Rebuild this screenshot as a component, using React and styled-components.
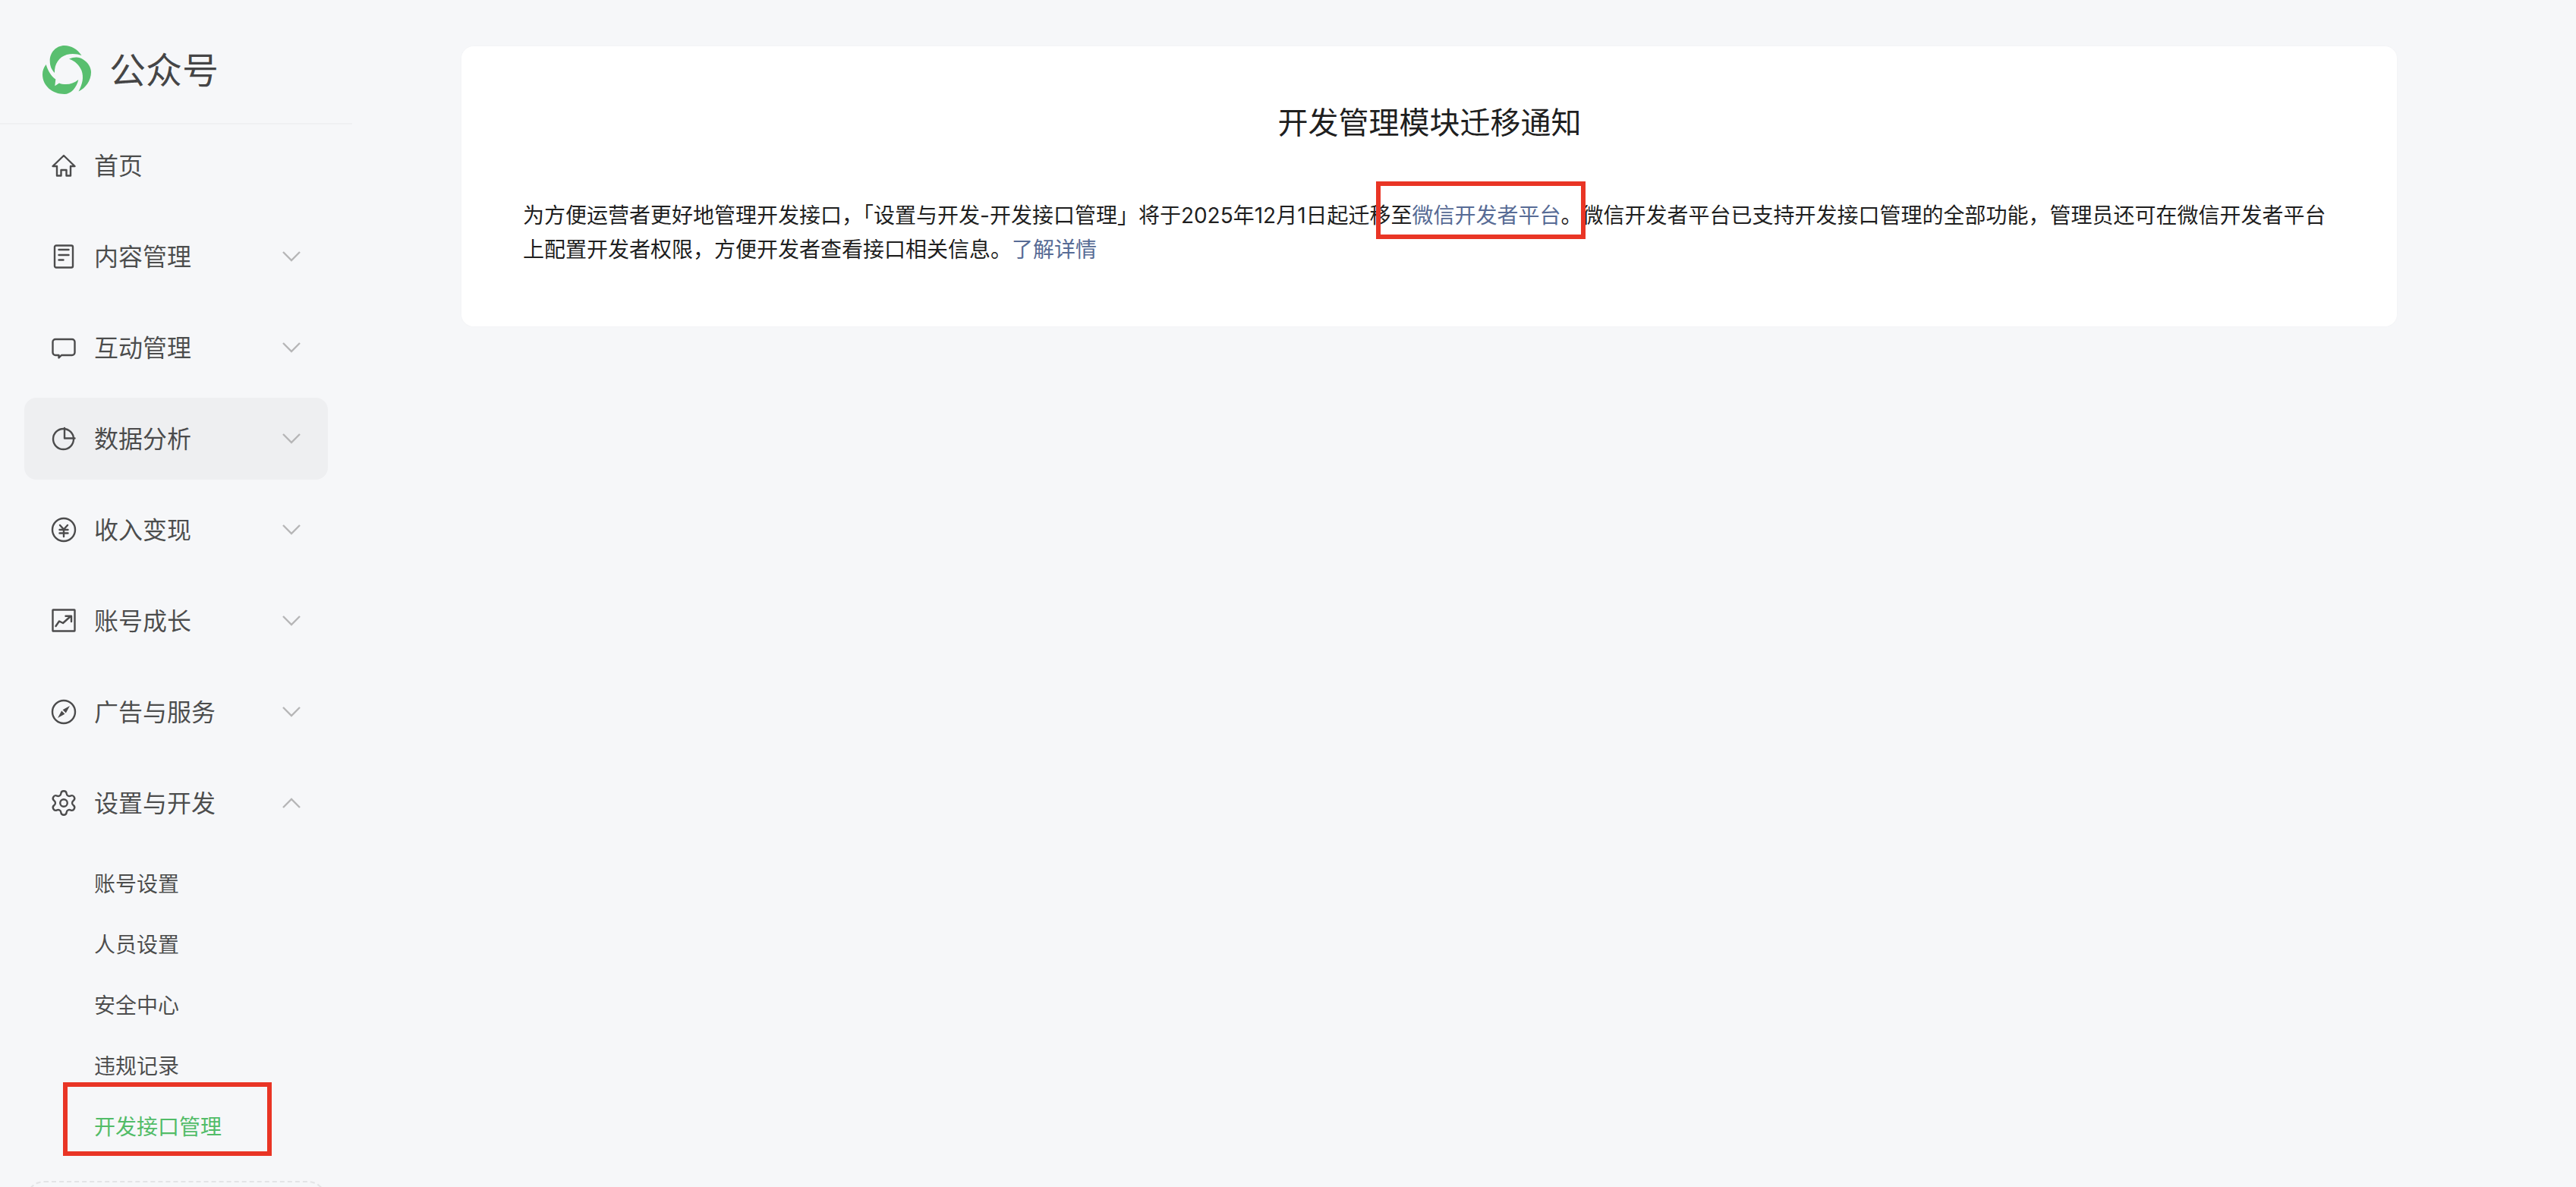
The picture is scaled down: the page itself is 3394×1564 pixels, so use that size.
import React from 'react'
import styled, { createGlobalStyle } from 'styled-components'
import { Settings } from 'lucide-react'

const GlobalStyle = createGlobalStyle`
  html, body {
    margin: 0;
    padding: 0;
    background: #f6f7f9;
  }
  * {
    box-sizing: border-box;
  }
`

const Page = styled.div`
  display: flex;
  width: 3394px;
  height: 1564px;
  overflow: hidden;
  background: #f6f7f9;
  font-family: Inter, "Noto Sans CJK SC", sans-serif;
`

const Sidebar = styled.aside`
  flex: 0 0 464px;
  display: flex;
  flex-direction: column;
`

const Brand = styled.div`
  flex: none;
  display: flex;
  align-items: center;
  gap: 24px;
  height: 164px;
  padding: 22px 0 0 56px;
  border-bottom: 2px solid #eff0f2;
`

const BrandName = styled.span`
  padding-top: 2px;
  font-size: 48px;
  line-height: 64px;
  color: rgba(0, 0, 0, 0.72);
`

const Nav = styled.nav`
  flex: none;
  display: flex;
  flex-direction: column;
  gap: 12px;
  padding: 0 32px;
`

const NavRow = styled.div`
  display: flex;
  align-items: center;
  height: 108px;
  padding: 0 36px;
  border-radius: 16px;
  background: ${(p) => (p.$hover ? '#eeeff1' : 'transparent')};
`

const NavLabel = styled.span`
  flex: 1;
  margin-left: 24px;
  padding-top: 2px;
  font-size: 32px;
  line-height: 44px;
  color: rgba(0, 0, 0, 0.7);
`

const IconSvg = styled.svg`
  flex: 0 0 32px;
  width: 32px;
  height: 32px;
  overflow: visible;
  fill: none;
  stroke: #4c4c4d;
  stroke-width: 2.4;
  stroke-linejoin: round;
  stroke-linecap: round;
`

const GearIcon = styled(Settings)`
  flex: 0 0 38px;
  width: 38px;
  height: 38px;
  margin: 0 -3px;
  color: #4c4c4d;
`

const ChevronSvg = styled.svg`
  flex: 0 0 24px;
  width: 24px;
  height: 14px;
  fill: none;
  stroke: #b6b6b7;
  stroke-width: 2.4;
`

const SubList = styled.div`
  display: flex;
  flex-direction: column;
`

const SubItem = styled.div`
  position: relative;
  height: 80px;
  padding-left: 92px;
  font-size: 28px;
  line-height: 82px;
  color: ${(p) => (p.$active ? '#52bc68' : 'rgba(0, 0, 0, 0.7)')};
`

const RedBox = styled.span`
  position: absolute;
  top: ${(p) => p.$top}px;
  right: ${(p) => p.$right}px;
  bottom: ${(p) => p.$bottom}px;
  left: ${(p) => p.$left}px;
  border: 6px solid #e93525;
  pointer-events: none;
`

const DashedBox = styled.div`
  flex: 0 0 200px;
  margin: 32px 34px 0;
  border: 2px dashed #e3e4e6;
  border-radius: 24px;
`

const Main = styled.main`
  flex: 1;
  padding: 61px 0 0 144px;
`

const Card = styled.section`
  width: 2550px;
  height: 369px;
  padding: 73px 80px 0 81px;
  border-radius: 16px;
  background: #fff;
  box-shadow: 0 0 4px rgba(0, 0, 0, 0.02);
`

const Title = styled.h1`
  margin: 0 0 72px;
  font-size: 40px;
  font-weight: 400;
  line-height: 56px;
  text-align: center;
  color: rgba(0, 0, 0, 0.9);
`

const Notice = styled.p`
  margin: 0;
  font-size: 28px;
  line-height: 45px;
  color: rgba(0, 0, 0, 0.9);
`

const NoticeLink = styled.a`
  color: #576b95;
  text-decoration: none;
`

const MarkedLink = styled(NoticeLink)`
  position: relative;
  display: inline-block;
`

const Logo = () => (
  <svg width="64" height="64" viewBox="0 0 64 64" fill="#59bf6f">
    <path d="M51.5 13C46 5 38 0 29 0C18 0 9.7 9 9.7 20C9.7 27 12 32 16 36C15.5 24 22 15 32 12C39 10 46 11 51.5 13Z" />
    <path d="M35 17.7C42 14.5 49 15 53 18C60 22 64 29 64 35C64 46 57 56 47.5 60.5C53 50 54.5 42 51.5 33C48.5 26 43 20 35 17.7Z" />
    <path d="M4.7 25C1.5 29 0 33 0 38C0 53 13 64 29 64C37 64 45 56 47.3 45C42 49 37 51 31 51C27 51 24 50.5 22 49.5L16.3 53.3L17.3 44.5C11 40 7 33 4.7 25Z" />
  </svg>
)

const HomeIcon = () => (
  <IconSvg viewBox="0 0 32 32">
    <path d="M16 3L1.5 17H7V29.5H12.5V22H19.5V29.5H25V17H30.5Z" />
  </IconSvg>
)

const DocIcon = () => (
  <IconSvg viewBox="0 0 32 32">
    <rect x="4" y="1.5" width="24" height="29" rx="2" />
    <path d="M9.5 7H22.5M9.5 14H22.5M9.5 20.5H15.5" />
  </IconSvg>
)

const CommentIcon = () => (
  <IconSvg viewBox="0 0 32 32">
    <path d="M5 5H27A3.5 3.5 0 0 1 30.5 8.5V22.5A3.5 3.5 0 0 1 27 26H13L9.5 29.5V26H5A3.5 3.5 0 0 1 1.5 22.5V8.5A3.5 3.5 0 0 1 5 5Z" />
  </IconSvg>
)

const PieIcon = () => (
  <IconSvg viewBox="0 0 32 32">
    <circle cx="15.5" cy="16.5" r="13.5" />
    <path d="M17 2V15.5H30.5" />
  </IconSvg>
)

const YenIcon = () => (
  <IconSvg viewBox="0 0 32 32">
    <circle cx="16" cy="16" r="15" />
    <path d="M11 10L16 15.5L21 10M10.5 16H21.5M10.5 20.5H21.5M16 15.5V25" />
  </IconSvg>
)

const TrendIcon = () => (
  <IconSvg viewBox="0 0 32 32">
    <rect x="1.5" y="1.5" width="29" height="28" rx="0.5" />
    <path d="M5.5 23L10 16.5L15 19L25 10M18.5 9.7H26V17" />
  </IconSvg>
)

const CompassIcon = () => (
  <IconSvg viewBox="0 0 32 32">
    <circle cx="16" cy="16" r="15" />
    <path d="M24 8L18.8 17.4L14.6 13.2Z M8 24L13.2 14.6L17.4 18.8Z" fill="#4c4c4d" stroke="none" />
  </IconSvg>
)

const Chevron = ({ up }) => (
  <ChevronSvg viewBox="0 0 24 14">
    <polyline points={up ? '1,13 12,2 23,13' : '1,1 12,12 23,1'} />
  </ChevronSvg>
)

const menu = [
  { label: '首页', icon: <HomeIcon />, plain: true },
  { label: '内容管理', icon: <DocIcon /> },
  { label: '互动管理', icon: <CommentIcon /> },
  { label: '数据分析', icon: <PieIcon />, hover: true },
  { label: '收入变现', icon: <YenIcon /> },
  { label: '账号成长', icon: <TrendIcon /> },
  { label: '广告与服务', icon: <CompassIcon /> },
  { label: '设置与开发', icon: <GearIcon strokeWidth={1.5} />, open: true },
]

const subMenu = ['账号设置', '人员设置', '安全中心', '违规记录']

const App = () => {
  return (
    <Page>
      <GlobalStyle />
      <Sidebar>
        <Brand>
          <Logo />
          <BrandName>公众号</BrandName>
        </Brand>
        <Nav>
          {menu.map((item) => (
            <NavRow key={item.label} $hover={item.hover}>
              {item.icon}
              <NavLabel>{item.label}</NavLabel>
              {!item.plain && <Chevron up={item.open} />}
            </NavRow>
          ))}
          <SubList>
            {subMenu.map((name) => (
              <SubItem key={name}>{name}</SubItem>
            ))}
            <SubItem $active>
              开发接口管理
              <RedBox $top={-18} $right={74} $bottom={1} $left={51} />
            </SubItem>
          </SubList>
        </Nav>
        <DashedBox />
      </Sidebar>
      <Main>
        <Card>
          <Title>开发管理模块迁移通知</Title>
          <Notice>
            为方便运营者更好地管理开发接口，「设置与开发-开发接口管理」将于2025年12月1日起迁移至
            <MarkedLink>
              微信开发者平台
              <RedBox $top={-23} $right={-32} $bottom={-8} $left={-48} />
            </MarkedLink>
            。微信开发者平台已支持开发接口管理的全部功能，管理员还可在微信开发者平台上配置开发者权限，方便开发者查看接口相关信息。
            <NoticeLink>了解详情</NoticeLink>
          </Notice>
        </Card>
      </Main>
    </Page>
  )
}

export default App
